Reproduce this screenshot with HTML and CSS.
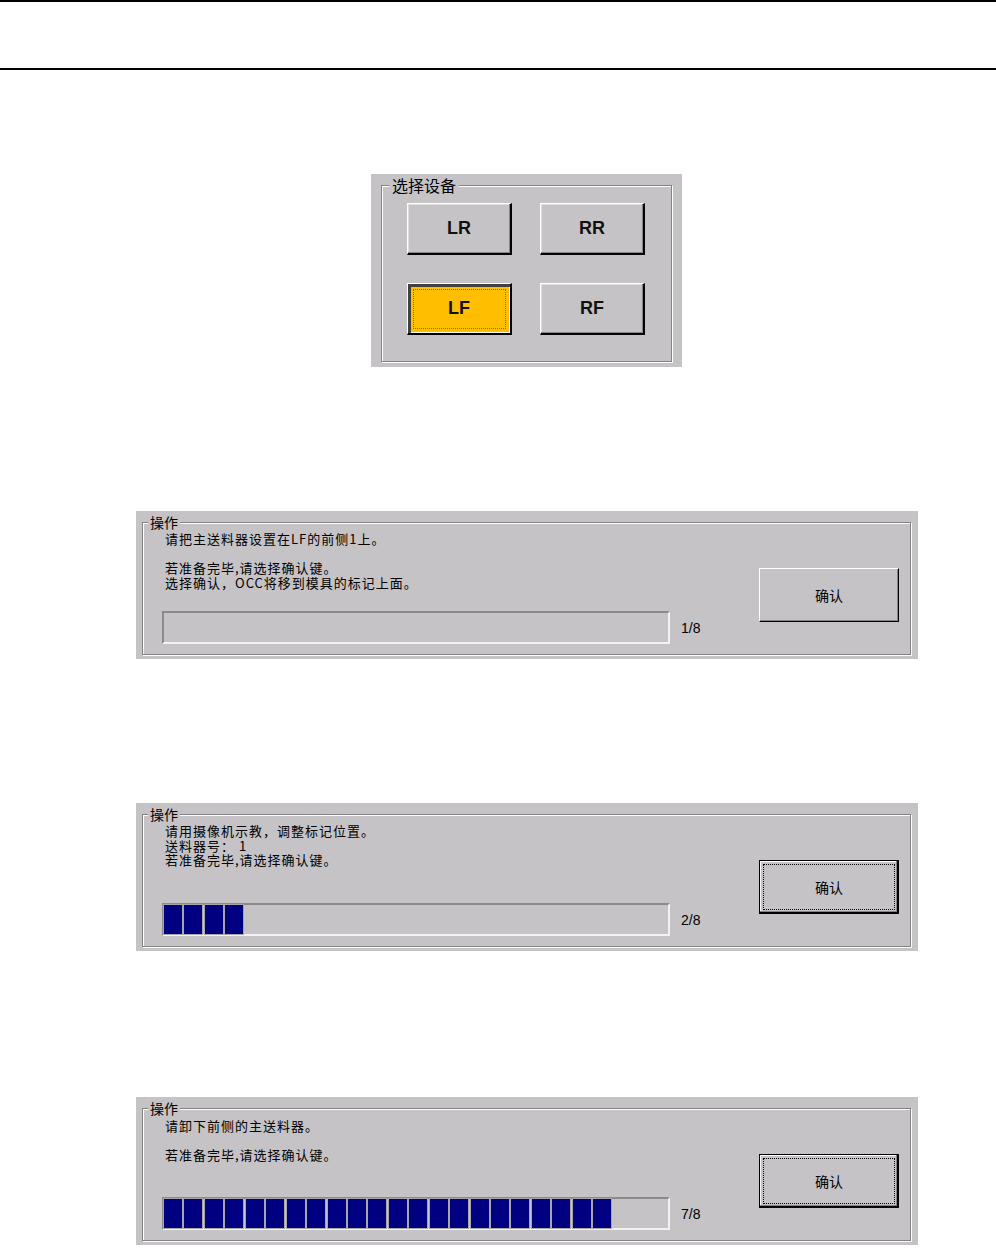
FILE: index.html
```html
<!DOCTYPE html>
<html lang="zh-CN">
<head>
    <meta charset="UTF-8">
    <meta name="viewport" content="width=device-width, initial-scale=1.0">
    <title>送料器示教</title>
    <link rel="stylesheet" href="styles.css">
</head>
<body>

<div class="top-bar"></div>

<div class="screen">
    <!-- device select -->
    <div class="device-panel">
        <fieldset class="group">
            <legend>选择设备</legend>
            <div class="device-grid">
                <button class="dev-btn">LR</button>
                <button class="dev-btn">RR</button>
                <button class="dev-btn is-active">LF</button>
                <button class="dev-btn">RF</button>
            </div>
        </fieldset>
    </div>

    <!-- step 1 -->
    <div class="op-panel op-first">
        <fieldset class="group">
            <legend>操作</legend>
            <div class="op-body">
                <div class="op-main">
                    <div class="op-text">
                        <p>请把主送料器设置在LF的前侧1上。</p>
                        <p>若准备完毕,请选择确认键。<br>选择确认，OCC将移到模具的标记上面。</p>
                    </div>
                    <div class="progress-row">
                        <div class="progress"></div>
                        <span class="step">1/8</span>
                    </div>
                </div>
                <button class="ok-btn">确认</button>
            </div>
        </fieldset>
    </div>

    <!-- step 2 -->
    <div class="op-panel op-second">
        <fieldset class="group">
            <legend>操作</legend>
            <div class="op-body">
                <div class="op-main">
                    <div class="op-text">
                        <p>请用摄像机示教，调整标记位置。<br>送料器号：&nbsp;1<br>若准备完毕,请选择确认键。</p>
                    </div>
                    <div class="progress-row">
                        <div class="progress">
                            <span class="blk"></span><span class="blk"></span><span class="blk"></span><span class="blk"></span>
                        </div>
                        <span class="step">2/8</span>
                    </div>
                </div>
                <button class="ok-btn is-default">确认</button>
            </div>
        </fieldset>
    </div>

    <!-- step 7 -->
    <div class="op-panel">
        <fieldset class="group">
            <legend>操作</legend>
            <div class="op-body">
                <div class="op-main">
                    <div class="op-text op-text-low">
                        <p>请卸下前侧的主送料器。</p>
                        <p>若准备完毕,请选择确认键。</p>
                    </div>
                    <div class="progress-row">
                        <div class="progress">
                            <span class="blk"></span><span class="blk"></span><span class="blk"></span><span class="blk"></span>
                            <span class="blk"></span><span class="blk"></span><span class="blk"></span><span class="blk"></span>
                            <span class="blk"></span><span class="blk"></span><span class="blk"></span><span class="blk"></span>
                            <span class="blk"></span><span class="blk"></span><span class="blk"></span><span class="blk"></span>
                            <span class="blk"></span><span class="blk"></span><span class="blk"></span><span class="blk"></span>
                            <span class="blk"></span><span class="blk"></span>
                        </div>
                        <span class="step">7/8</span>
                    </div>
                </div>
                <button class="ok-btn is-default">确认</button>
            </div>
        </fieldset>
    </div>
</div>

</body>
</html>
```

FILE: styles.css
```css
body {
    margin: 0;
    background: #fff;
    color: #000;
    font-family: "Noto Sans CJK SC", "Liberation Sans", sans-serif;
}
.top-bar {
    height: 70px;
    box-sizing: border-box;
    border-top: 2px solid #000;
    border-bottom: 2px solid #000;
}
.screen {
    display: flex;
    flex-direction: column;
    align-items: flex-start;
}

/* etched group box */
.group {
    flex: 1;
    margin: 0;
    padding: 0;
    min-width: 0;
    border: 1px solid #848284;
    box-shadow: inset 1px 1px 0 #fff, 1px 1px 0 #fff;
}
.group legend {
    background: #c6c3c6;
}

/* device select */
.device-panel {
    margin: 104px 0 0 371px;
    width: 311px;
    height: 193px;
    box-sizing: border-box;
    padding: 2px 10px 5px 10px;
    background: #c6c3c6;
    display: flex;
    flex-direction: column;
}
.device-panel legend {
    margin-left: 7px;
    padding: 0 3px;
    font-size: 16px;
    line-height: 18px;
}
.device-grid {
    display: grid;
    grid-template-columns: 105px 105px;
    grid-auto-rows: 52px;
    gap: 28px;
    padding: 9px 0 0 25px;
}
.dev-btn {
    padding: 0;
    font: bold 18px "Liberation Sans", Arial, sans-serif;
    color: #111;
    background: #c6c3c6;
    border-style: solid;
    border-width: 1px 2px 2px 1px;
    border-color: #fff #000 #000 #fff;
    box-shadow: inset -1px -1px 0 #848284, inset 1px 1px 0 #dedede;
}
.dev-btn.is-active {
    background: #ffbe00;
    box-shadow: inset 3px 3px 0 #424142, inset -1px -1px 0 #fff;
    outline: 1px dotted #4f6fa0;
    outline-offset: -7px;
}

/* operation panels */
.op-panel {
    margin: 146px 0 0 136px;
    width: 782px;
    height: 148px;
    box-sizing: border-box;
    padding: 4px 7px 4px 6px;
    background: #c6c3c6;
    display: flex;
    flex-direction: column;
}
.op-first {
    margin-top: 144px;
}
.op-second {
    margin-top: 144px;
}
.op-panel legend {
    margin-left: 5px;
    padding: 0 2px;
    font-size: 14px;
    line-height: 14px;
}
.op-body {
    display: flex;
    align-items: flex-start;
}
.op-main {
    width: 600px;
    box-sizing: border-box;
    padding-left: 19px;
}
.op-text {
    height: 82px;
    box-sizing: border-box;
    padding: 3px 0 0 3px;
    font-size: 13px;
    letter-spacing: 1px;
    line-height: 14.5px;
}
.op-text-low {
    padding-top: 4px;
}
.op-text p {
    margin: 0 0 14.5px;
}
.progress-row {
    display: flex;
    align-items: center;
}
.progress {
    width: 508px;
    height: 33px;
    box-sizing: border-box;
    border: 2px solid;
    border-color: #8c898c #f2f2f2 #f2f2f2 #8c898c;
    display: flex;
    gap: 2.45px;
}
.blk {
    width: 18px;
    background: #000080;
    box-shadow: 0 0 0 1px #a8a6a8;
}
.step {
    margin-left: 11px;
    font: 14px "Liberation Sans", Arial, sans-serif;
}
.ok-btn {
    margin: 39px 0 0 16px;
    width: 140px;
    height: 54px;
    padding: 0;
    font-family: "Noto Sans CJK SC", sans-serif;
    font-size: 14px;
    color: #000;
    background: #c6c3c6;
    border: 1px solid;
    border-color: #fff #000 #000 #fff;
    box-shadow: inset -1px -1px 0 #848284;
}
.ok-btn.is-default {
    border-color: #000;
    box-shadow: inset -1px -1px 0 #000, inset -2px -2px 0 #848284, inset 1px 1px 0 #fff;
    outline: 1px dotted #000;
    outline-offset: -5px;
}
```
